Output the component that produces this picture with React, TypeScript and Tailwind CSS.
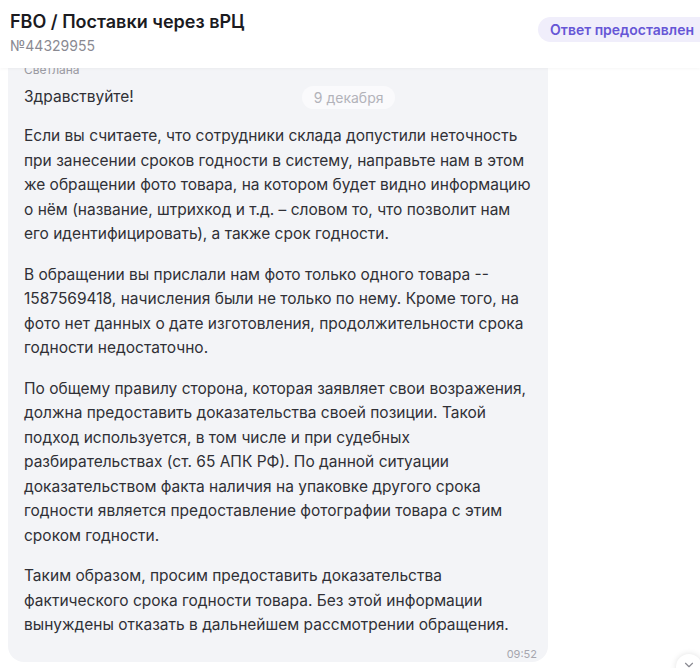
import { ChevronDown } from "lucide-react";

const paragraphs = [
    "Если вы считаете, что сотрудники склада допустили неточность при занесении сроков годности в систему, направьте нам в этом же обращении фото товара, на котором будет видно информацию о нём (название, штрихкод и т.д. – словом то, что позволит нам его идентифицировать), а также срок годности.",
    "В обращении вы прислали нам фото только одного товара -- 1587569418, начисления были не только по нему. Кроме того, на фото нет данных о дате изготовления, продолжительности срока годности недостаточно.",
    "По общему правилу сторона, которая заявляет свои возражения, должна предоставить доказательства своей позиции. Такой подход используется, в том числе и при судебных разбирательствах (ст. 65 АПК РФ). По данной ситуации доказательством факта наличия на упаковке другого срока годности является предоставление фотографии товара с этим сроком годности.",
    "Таким образом, просим предоставить доказательства фактического срока годности товара. Без этой информации вынуждены отказать в дальнейшем рассмотрении обращения.",
];

const App = () => {
    return (
        <div className="w-[700px] h-[668px] overflow-hidden bg-white font-['Inter','Noto_Sans',sans-serif] relative">
            <div className="h-[68px] flex justify-between items-start pl-[10px] pt-[9px] relative z-10 bg-white shadow-[0_1px_3px_rgba(0,0,0,0.04)]">
                <div>
                    <h1 className="text-[18px] leading-[26px] font-semibold text-[#1b1b1f]">
                        FBO / Поставки через вРЦ
                    </h1>
                    <div className="text-[14px] leading-[20px] text-[#8a8a92] mt-[1px]">№44329955</div>
                </div>
                <div className="mt-[8px] h-[25px] flex items-center pl-[12px] pr-[6px] rounded-l-full bg-[#f0eefb] text-[14px] font-semibold text-[#6656d6]">
                    Ответ предоставлен
                </div>
            </div>

            <div className="ml-[8px] w-[540px] h-[594px] bg-[#f3f4f7] rounded-b-[16px] overflow-hidden px-[16px] relative">
                <div className="text-[12px] leading-[14px] text-[#9a9aa2] -mt-[5px]">Светлана</div>
                <div className="flex items-center mt-[8px]">
                    <span className="text-[15.5px] leading-[24px] text-[#303036]">Здравствуйте!</span>
                    <span className="ml-[168px] px-[12px] h-[23px] flex items-center rounded-full bg-[#fafafc] text-[14px] text-[#b3b3ba]">
                        9 декабря
                    </span>
                </div>
                <div className="mt-[15px] flex flex-col gap-[16px] text-[15.5px] leading-[24.5px] text-[#303036] w-[508px]">
                    {paragraphs.map((p, i) => (
                        <p key={i}>{p}</p>
                    ))}
                </div>
                <div className="text-right text-[11px] leading-[16px] text-[#a6a6ae] mt-[8px] -mr-[5px]">09:52</div>
            </div>

            <div className="absolute right-[-2px] bottom-[-12px] w-[26px] h-[26px] rounded-full bg-white shadow-[0_0_6px_rgba(0,0,0,0.12)] flex items-start justify-center pt-[4px]">
                <ChevronDown size={14} className="text-[#8a8a92]" />
            </div>
        </div>
    );
};

export default App;
